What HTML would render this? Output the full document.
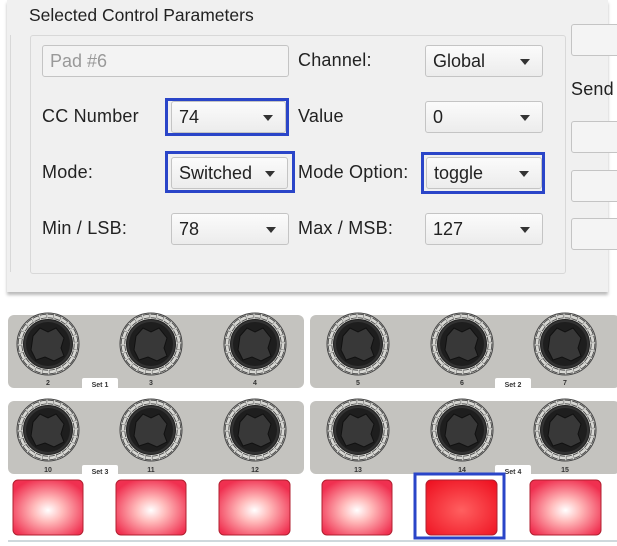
<!DOCTYPE html>
<html><head><meta charset="utf-8"><style>
*{margin:0;padding:0;box-sizing:border-box}
body{width:617px;height:546px;background:#fff;position:relative;overflow:hidden;font-family:"Liberation Sans",Arial,sans-serif;font-size:18px;color:#222}
.a{position:absolute}
.top{left:7px;top:0;width:601px;height:292px;background:#f0f0f0;box-shadow:0 3px 3px #bbb}
.gb{left:30px;top:35px;width:536px;height:239px;border:1px solid #d8d8d8;border-radius:3px}
.lbl{position:absolute;font-size:18px;color:#222;letter-spacing:.2px}
.cb{position:absolute;height:32px;border:1px solid #c4c4c4;border-radius:3px;background:linear-gradient(#fbfbfb,#ececec);padding:5px 7px;font-size:18px}
.cb:after{content:"";position:absolute;right:12px;top:13px;border-left:5px solid transparent;border-right:5px solid transparent;border-top:6px solid #333}
.cb.n:after{display:none}
.blue{position:absolute;border:3px solid #2a45c8}
.btn{position:absolute;left:571px;width:50px;height:32px;border:1px solid #c4c4c4;border-radius:3px;background:#f4f4f4}
</style></head><body>
<div class="a top"></div>
<div class="a" style="left:7px;top:35px;width:4px;height:237px;border-right:1px solid #d8d8d8"></div>
<div class="lbl" style="left:29px;top:5px;font-size:17.5px;letter-spacing:0">Selected Control Parameters</div>
<div class="a gb"></div>
<div class="cb n" style="left:42px;top:45px;width:247px;background:#f3f3f3;color:#999">Pad #6</div>
<div class="lbl" style="left:298px;top:50px">Channel:</div>
<div class="cb" style="left:425px;top:45px;width:118px">Global</div>
<div class="lbl" style="left:42px;top:106px">CC Number</div>
<div class="blue" style="left:165px;top:98px;width:124px;height:38px"></div>
<div class="cb" style="left:171px;top:101px;width:115px">74</div>
<div class="lbl" style="left:298px;top:106px">Value</div>
<div class="cb" style="left:425px;top:101px;width:118px">0</div>
<div class="lbl" style="left:42px;top:162px">Mode:</div>
<div class="blue" style="left:165px;top:151px;width:130px;height:42px"></div>
<div class="cb" style="left:171px;top:157px;width:117px">Switched</div>
<div class="lbl" style="left:298px;top:162px">Mode Option:</div>
<div class="blue" style="left:421px;top:152px;width:124px;height:42px"></div>
<div class="cb" style="left:426px;top:157px;width:116px">toggle</div>
<div class="lbl" style="left:42px;top:218px">Min / LSB:</div>
<div class="cb" style="left:171px;top:213px;width:118px">78</div>
<div class="lbl" style="left:298px;top:218px">Max / MSB:</div>
<div class="cb" style="left:425px;top:213px;width:118px">127</div>
<div class="btn" style="top:24px"></div>
<div class="lbl" style="left:571px;top:79px">Send</div>
<div class="btn" style="top:121px"></div>
<div class="btn" style="top:170px"></div>
<div class="btn" style="top:218px"></div>

<svg class="a" style="left:0;top:0" width="617" height="546">
<defs>
<radialGradient id="pad" cx="50%" cy="55%" r="60%"><stop offset="0" stop-color="#fff"/><stop offset=".35" stop-color="#fbb"/><stop offset="1" stop-color="#f03050"/></radialGradient>
<radialGradient id="pad2" cx="50%" cy="55%" r="70%"><stop offset="0" stop-color="#ff6060"/><stop offset="1" stop-color="#ee1020"/></radialGradient>
<g id="k">
<circle r="31" fill="#d8d8d4" stroke="#444" stroke-width="1"/>
<circle r="28" fill="none" stroke="#444" stroke-width="4.5" stroke-dasharray="6 1.3"/>
<circle r="28" fill="none" stroke="#d8d8d4" stroke-width="2.8" stroke-dasharray="5.6 1.7"/>
<circle r="24.5" fill="#333" stroke="#222"/>
<circle r="22" fill="#1e1e1e"/>
<path d="M-15,-8 L-8,-16 L0,-12 L8,-16 L16,-6 L13,4 L16,12 L6,17 L-3,13 L-12,16 L-17,6 Z" fill="#383838" stroke="#111"/>
</g>
</defs>
<rect x="8" y="315" width="296" height="73" rx="6" fill="#c4c3bf"/>
<rect x="310" y="315" width="310" height="73" rx="6" fill="#c4c3bf"/>
<rect x="8" y="401" width="296" height="73" rx="6" fill="#c4c3bf"/>
<rect x="310" y="401" width="310" height="73" rx="6" fill="#c4c3bf"/>
<rect x="82" y="378" width="36" height="12" rx="2" fill="#fff"/>
<rect x="495" y="378" width="36" height="12" rx="2" fill="#fff"/>
<rect x="82" y="465" width="36" height="12" rx="2" fill="#fff"/>
<rect x="495" y="465" width="36" height="12" rx="2" fill="#fff"/>
<g font-family="Liberation Sans" font-size="7" font-weight="bold" fill="#333" text-anchor="middle">
<text x="100" y="387">Set 1</text><text x="513" y="387">Set 2</text>
<text x="100" y="474">Set 3</text><text x="513" y="474">Set 4</text>
<text x="48" y="385">2</text><text x="151" y="385">3</text><text x="255" y="385">4</text>
<text x="358" y="385">5</text><text x="462" y="385">6</text><text x="565" y="385">7</text>
<text x="48" y="472">10</text><text x="151" y="472">11</text><text x="255" y="472">12</text>
<text x="358" y="472">13</text><text x="462" y="472">14</text><text x="565" y="472">15</text>
</g>
<use href="#k" x="48" y="344"/><use href="#k" x="151" y="344"/><use href="#k" x="255" y="344"/>
<use href="#k" x="358" y="344"/><use href="#k" x="462" y="344"/><use href="#k" x="565" y="344"/>
<use href="#k" x="48" y="430"/><use href="#k" x="151" y="430"/><use href="#k" x="255" y="430"/>
<use href="#k" x="358" y="430"/><use href="#k" x="462" y="430"/><use href="#k" x="565" y="430"/>
<rect x="13" y="480" width="70" height="55" rx="5" fill="url(#pad)" stroke="#b02030"/>
<rect x="116" y="480" width="70" height="55" rx="5" fill="url(#pad)" stroke="#b02030"/>
<rect x="219" y="480" width="71" height="55" rx="5" fill="url(#pad)" stroke="#b02030"/>
<rect x="322" y="480" width="70" height="55" rx="5" fill="url(#pad)" stroke="#b02030"/>
<rect x="426" y="480" width="71" height="55" rx="5" fill="url(#pad2)" stroke="#b02030"/>
<rect x="530" y="480" width="71" height="55" rx="5" fill="url(#pad)" stroke="#b02030"/>
<rect x="415" y="474" width="89" height="64" fill="none" stroke="#2a45c8" stroke-width="3"/>
<line x1="8" y1="541" x2="617" y2="541" stroke="#cfd8dc" stroke-width="2"/>
</svg>
</body></html>
